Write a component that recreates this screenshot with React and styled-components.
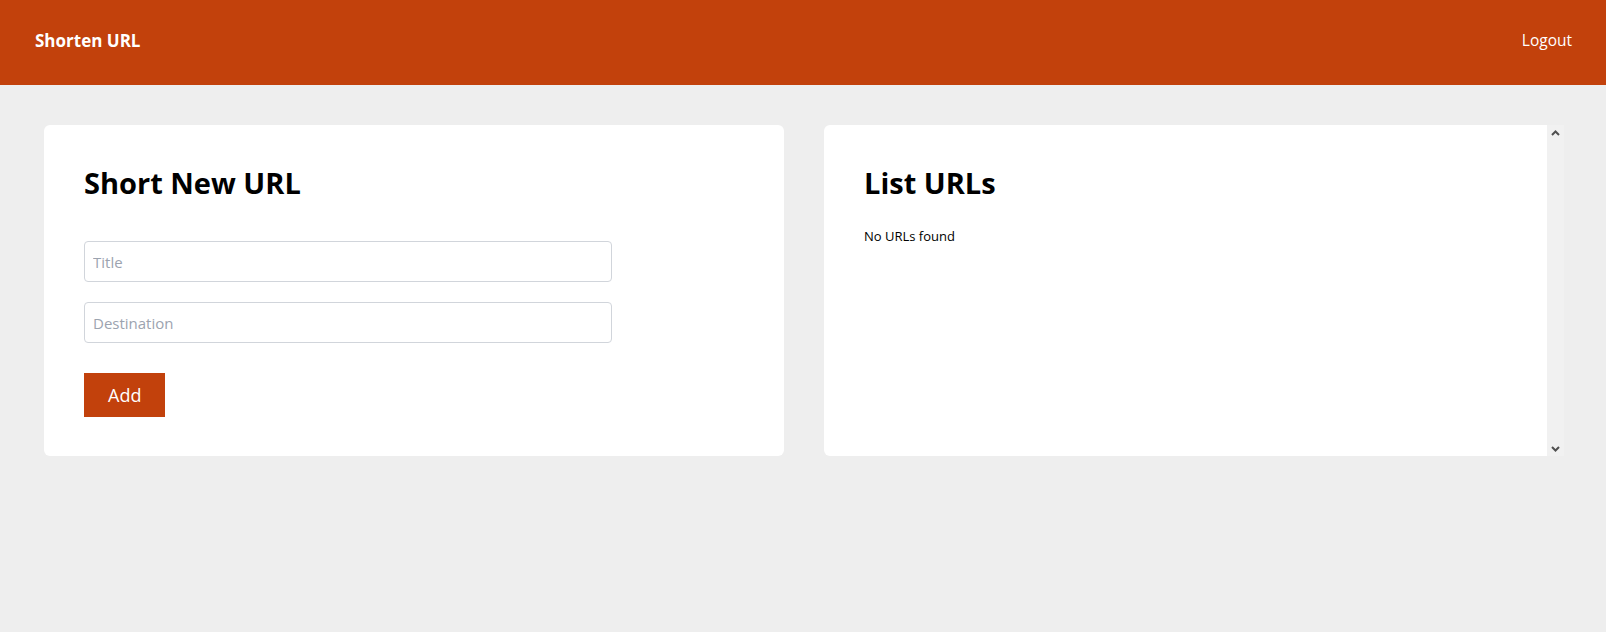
import React, { useState } from "react";
import styled, { createGlobalStyle } from "styled-components";

const GlobalStyle = createGlobalStyle`
  * {
    box-sizing: border-box;
  }
  html, body {
    margin: 0;
    padding: 0;
    background: #eeeeee;
    font-family: "Open Sans", "Noto Sans", Arial, sans-serif;
    color: #000;
  }
`;

const Chevron = ({ up }) => (
  <svg width="9" height="6" viewBox="0 0 9 6">
    <path
      d={up ? "M1 5 L4.5 1.5 L8 5" : "M1 1 L4.5 4.5 L8 1"}
      fill="none"
      stroke="#505050"
      strokeWidth="2"
    />
  </svg>
);

export default function App() {
  const [title, setTitle] = useState("");
  const [destination, setDestination] = useState("");
  const [urls] = useState([]);

  return (
    <>
      <GlobalStyle />
      <Header>
        <Brand>Shorten URL</Brand>
        <NavLink href="#">Logout</NavLink>
      </Header>

      <Main>
        <Card>
          <Heading>Short New URL</Heading>
          <Form onSubmit={(e) => e.preventDefault()}>
            <Input
              value={title}
              onChange={(e) => setTitle(e.target.value)}
              placeholder="Title"
              name="title"
            />
            <Input
              value={destination}
              onChange={(e) => setDestination(e.target.value)}
              placeholder="Destination"
              name="destination"
            />
            <Button type="submit">Add</Button>
          </Form>
        </Card>

        <ListCard>
          <ListBody>
            <Heading>List URLs</Heading>
            {urls.length === 0 && <Empty>No URLs found</Empty>}
          </ListBody>
          <ScrollTrack>
            <Chevron up />
            <Chevron />
          </ScrollTrack>
        </ListCard>
      </Main>
    </>
  );
}

const Header = styled.header`
  height: 85px;
  background: #c2410c;
  color: #fff;
  display: flex;
  align-items: center;
  justify-content: space-between;
  padding: 0 34px 5px 35px;
`;

const Brand = styled.div`
  font-weight: 700;
  font-size: 17px;
`;

const NavLink = styled.a`
  color: #fff;
  text-decoration: none;
  font-size: 15.5px;
`;

const Main = styled.main`
  display: grid;
  grid-template-columns: 1fr 1fr;
  gap: 40px;
  padding: 40px 42px 40px 44px;
  align-items: start;
`;

const Card = styled.section`
  background: #fff;
  border-radius: 6px;
  height: 331px;
  padding: 40px;
`;

const ListCard = styled(Card)`
  display: flex;
  padding: 0;
  border-radius: 6px 0 0 6px;
  overflow: hidden;
`;

const ListBody = styled.div`
  flex: 1;
  padding: 40px;
`;

const ScrollTrack = styled.div`
  width: 17px;
  flex-shrink: 0;
  background: #f1f1f1;
  display: flex;
  flex-direction: column;
  align-items: center;
  justify-content: space-between;
  padding: 5px 0 4px;
`;

const Heading = styled.h2`
  margin: 0 0 25px;
  font-size: 29px;
  line-height: 36px;
  font-weight: 700;
`;

const Form = styled.form`
  display: flex;
  flex-direction: column;
  align-items: flex-start;
  gap: 20px;
  padding-top: 15px;
`;

const Input = styled.input`
  width: 80%;
  height: 41px;
  border: 1px solid #d1d5db;
  border-radius: 4px;
  padding: 0 8px;
  font-family: inherit;
  font-size: 15px;
  color: #111;
  outline: none;

  &::placeholder {
    color: #9ca3af;
  }
`;

const Button = styled.button`
  margin-top: 10px;
  height: 44px;
  padding: 0 24px;
  border: none;
  background: #c2410c;
  color: #fff;
  font-family: inherit;
  font-size: 18px;
  cursor: pointer;
`;

const Empty = styled.p`
  margin: 0;
  font-size: 13px;
  line-height: 20px;
`;
